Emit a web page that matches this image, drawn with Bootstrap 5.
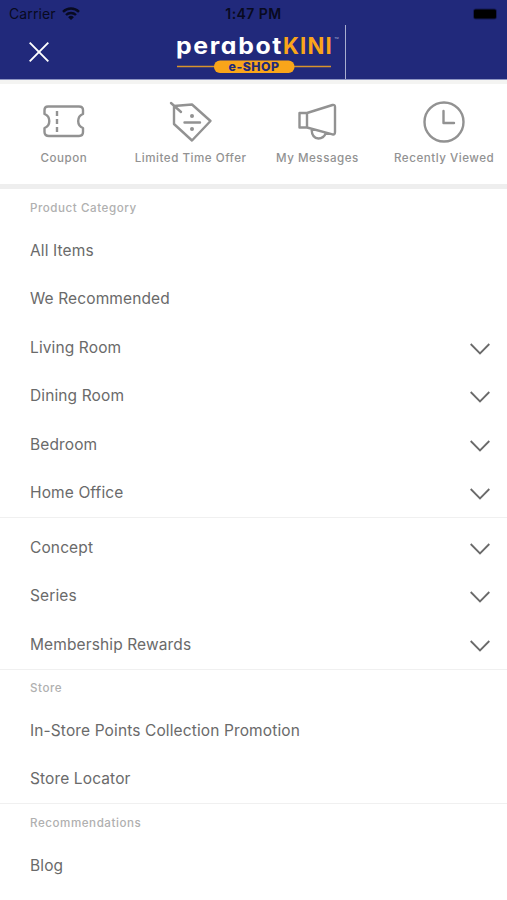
<!DOCTYPE html>
<html lang="en">
<head>
<meta charset="utf-8">
<meta name="viewport" content="width=device-width, initial-scale=1">
<title>perabotKINI e-Shop</title>
<link href="https://cdn.jsdelivr.net/npm/bootstrap@5.3.0/dist/css/bootstrap.min.css" rel="stylesheet">
<style>
body{font-family:Inter,"Liberation Sans",sans-serif;background:#fff;color:#6a6a6a;min-height:900px;overflow-x:hidden}
.topbar{background:#21297b;height:80px;border-bottom:1px solid #8f96c4}
.status{height:25px;padding:2px 9px 0;color:#080a20;font-size:14px;line-height:24px}
.status>*{flex:1 1 0}
.carrier{font-size:14px;letter-spacing:.1px}
.carrier svg{margin-left:-2px}
.clock{font-weight:600;font-size:14px;letter-spacing:.45px;white-space:nowrap}
.brandrow{height:54px;display:grid;grid-template-columns:165px 180px 1fr}
.closebtn{width:20px;height:20px;margin:17px 0 0 29px}
.brand{border-right:1px solid #a9aed0;width:181px}
.actions{height:104px;border-top:4px solid #f4f4f2}
.action{padding-top:14px;color:#929292;font-size:11.6px;font-weight:500;letter-spacing:.52px;white-space:nowrap}
.action svg{width:46px;height:46px;fill:none;stroke:#929292;stroke-width:2.4;stroke-linejoin:round;stroke-linecap:round}
.action span{line-height:18px;margin:5px 0 0 1px}
.thick{height:5px;background:#eee}
.menu-group{border-bottom:1px solid #f0f0f0}
.menu-group.plain{padding-top:5px;margin-bottom:-.5px}
.menu-title{height:37px;line-height:36px;padding:1px 0 0 30px;font-size:11.6px;font-weight:500;letter-spacing:.55px;color:#b0b0b0}
.menu-row{height:48.5px;padding:0 17px 0 30px;font-size:15.5px;letter-spacing:.12px;color:#6a6a6a;text-decoration:none}
.menu-row svg{width:20px;height:12px;margin-top:3px;fill:none;stroke:#6a6a6a;stroke-width:1.8}
</style>
</head>
<body>
<header class="topbar">
  <div class="status d-flex align-items-center">
    <div class="carrier d-flex align-items-center gap-2"><span>Carrier</span>
      <svg width="18" height="13" viewBox="0 0 18 13" fill="none" stroke="#080a20" stroke-width="2.4"><path d="M1 4.8a11.5 11.5 0 0 1 16 0M4 8a7.2 7.2 0 0 1 10 0"/><path d="M9 13 6.1 10.2a4.2 4.2 0 0 1 5.8 0z" fill="#080a20" stroke="none"/></svg>
    </div>
    <div class="clock text-center">1:47 PM</div>
    <div class="d-flex justify-content-end"><svg width="26" height="12" viewBox="0 0 26 12"><rect x="1" y=".5" width="24" height="11" rx="3" fill="#151a55"/><rect x="2" y="1.5" width="22" height="9" rx="1.5" fill="#000"/></svg></div>
  </div>
  <div class="brandrow">
    <a href="#" class="closebtn d-block" aria-label="Close"><svg class="d-block" width="20" height="20" viewBox="0 0 20 20" stroke="#fff" stroke-width="1.9"><path d="M.7.7 19.3 19.3M19.3.7.7 19.3"/></svg></a>
    <div class="brand">
      <svg class="d-block" width="180" height="54" viewBox="165 25 180 54">
        <g font-family="Inter, sans-serif" font-weight="700">
          <text x="176" y="53.500" font-size="23" letter-spacing="1.5" fill="#fff" textLength="107" lengthAdjust="spacingAndGlyphs" style="font-feature-settings:'cv11'">perabot</text>
          <text x="283" y="53.500" font-size="22.500" letter-spacing="1.2" fill="#f9a51a" textLength="50" lengthAdjust="spacingAndGlyphs">KINI</text>
          <text x="334.500" y="39" font-size="2.600" font-weight="400" fill="#c8cbe2">TM</text>
          <path d="M177 66.500H331" stroke="#d8932c" stroke-width="1.500"/>
          <rect x="214" y="60.500" width="80.500" height="12.500" rx="6" fill="#f9a51a"/>
          <text x="228.500" y="70.700" font-size="11.500" letter-spacing=".5" font-weight="800" fill="#21297b" textLength="51" lengthAdjust="spacingAndGlyphs">e-SHOP</text>
        </g>
      </svg>
    </div>
  </div>
</header>

<nav class="actions row g-0 text-center">
  <a class="action col-3 d-flex flex-column align-items-center text-decoration-none" href="#">
    <svg viewBox="0 0 46 46"><path d="M8 8.500H39Q43 8.500 43 12V16A7.500 7.500 0 0 0 43 30V34Q43 38 39 38H9Q4.500 38 4.500 34V30A7.500 7.500 0 0 0 4.500 16V12Q4.500 8.500 8 8.500Z"/><path d="M17 13V18M17 21V26M17 29V34" stroke-linecap="butt"/></svg>
    <span>Coupon</span></a>
  <a class="action col-3 d-flex flex-column align-items-center text-decoration-none" href="#">
    <svg viewBox="0 0 46 46"><path d="M7 8 25 6.500 43.500 23 25 42.500 7 26ZM4 5 14 14M17.500 24.500H33"/><g fill="#929292" stroke="none"><circle cx="25" cy="18" r="2"/><circle cx="25" cy="31" r="2"/></g></svg>
    <span>Limited Time Offer</span></a>
  <a class="action col-3 d-flex flex-column align-items-center text-decoration-none" href="#">
    <svg viewBox="0 0 46 46"><path d="M5.500 15H13V29.500H5.500ZM13 15 38.500 7Q41 6.300 41 9V34Q41 37 38.500 36.300L13 29.500M17.500 31Q18 40.500 24.500 40.500 29.500 40.500 32 35"/></svg>
    <span>My Messages</span></a>
  <a class="action col-3 d-flex flex-column align-items-center text-decoration-none" href="#">
    <svg viewBox="0 0 46 46"><circle cx="23" cy="24" r="19.500"/><path d="M22.500 13V25H33"/></svg>
    <span>Recently Viewed</span></a>
</nav>
<div class="thick"></div>

<main>
  <section class="menu-group">
    <div class="menu-title">Product Category</div>
    <a href="#" class="menu-row d-flex align-items-center justify-content-between"><span>All Items</span></a>
    <a href="#" class="menu-row d-flex align-items-center justify-content-between"><span>We Recommended</span></a>
    <a href="#" class="menu-row d-flex align-items-center justify-content-between"><span>Living Room</span><svg viewBox="0 0 20 12"><path d="M.7 1 10 10.500 19.300 1"/></svg></a>
    <a href="#" class="menu-row d-flex align-items-center justify-content-between"><span>Dining Room</span><svg viewBox="0 0 20 12"><path d="M.7 1 10 10.500 19.300 1"/></svg></a>
    <a href="#" class="menu-row d-flex align-items-center justify-content-between"><span>Bedroom</span><svg viewBox="0 0 20 12"><path d="M.7 1 10 10.500 19.300 1"/></svg></a>
    <a href="#" class="menu-row d-flex align-items-center justify-content-between"><span>Home Office</span><svg viewBox="0 0 20 12"><path d="M.7 1 10 10.500 19.300 1"/></svg></a>
  </section>
  <section class="menu-group plain">
    <a href="#" class="menu-row d-flex align-items-center justify-content-between"><span>Concept</span><svg viewBox="0 0 20 12"><path d="M.7 1 10 10.500 19.300 1"/></svg></a>
    <a href="#" class="menu-row d-flex align-items-center justify-content-between"><span>Series</span><svg viewBox="0 0 20 12"><path d="M.7 1 10 10.500 19.300 1"/></svg></a>
    <a href="#" class="menu-row d-flex align-items-center justify-content-between"><span>Membership Rewards</span><svg viewBox="0 0 20 12"><path d="M.7 1 10 10.500 19.300 1"/></svg></a>
  </section>
  <section class="menu-group">
    <div class="menu-title">Store</div>
    <a href="#" class="menu-row d-flex align-items-center"><span>In-Store Points Collection Promotion</span></a>
    <a href="#" class="menu-row d-flex align-items-center"><span>Store Locator</span></a>
  </section>
  <section>
    <div class="menu-title">Recommendations</div>
    <a href="#" class="menu-row d-flex align-items-center"><span>Blog</span></a>
  </section>
</main>
<script src="https://cdn.jsdelivr.net/npm/bootstrap@5.3.0/dist/js/bootstrap.bundle.min.js"></script>
</body>
</html>
